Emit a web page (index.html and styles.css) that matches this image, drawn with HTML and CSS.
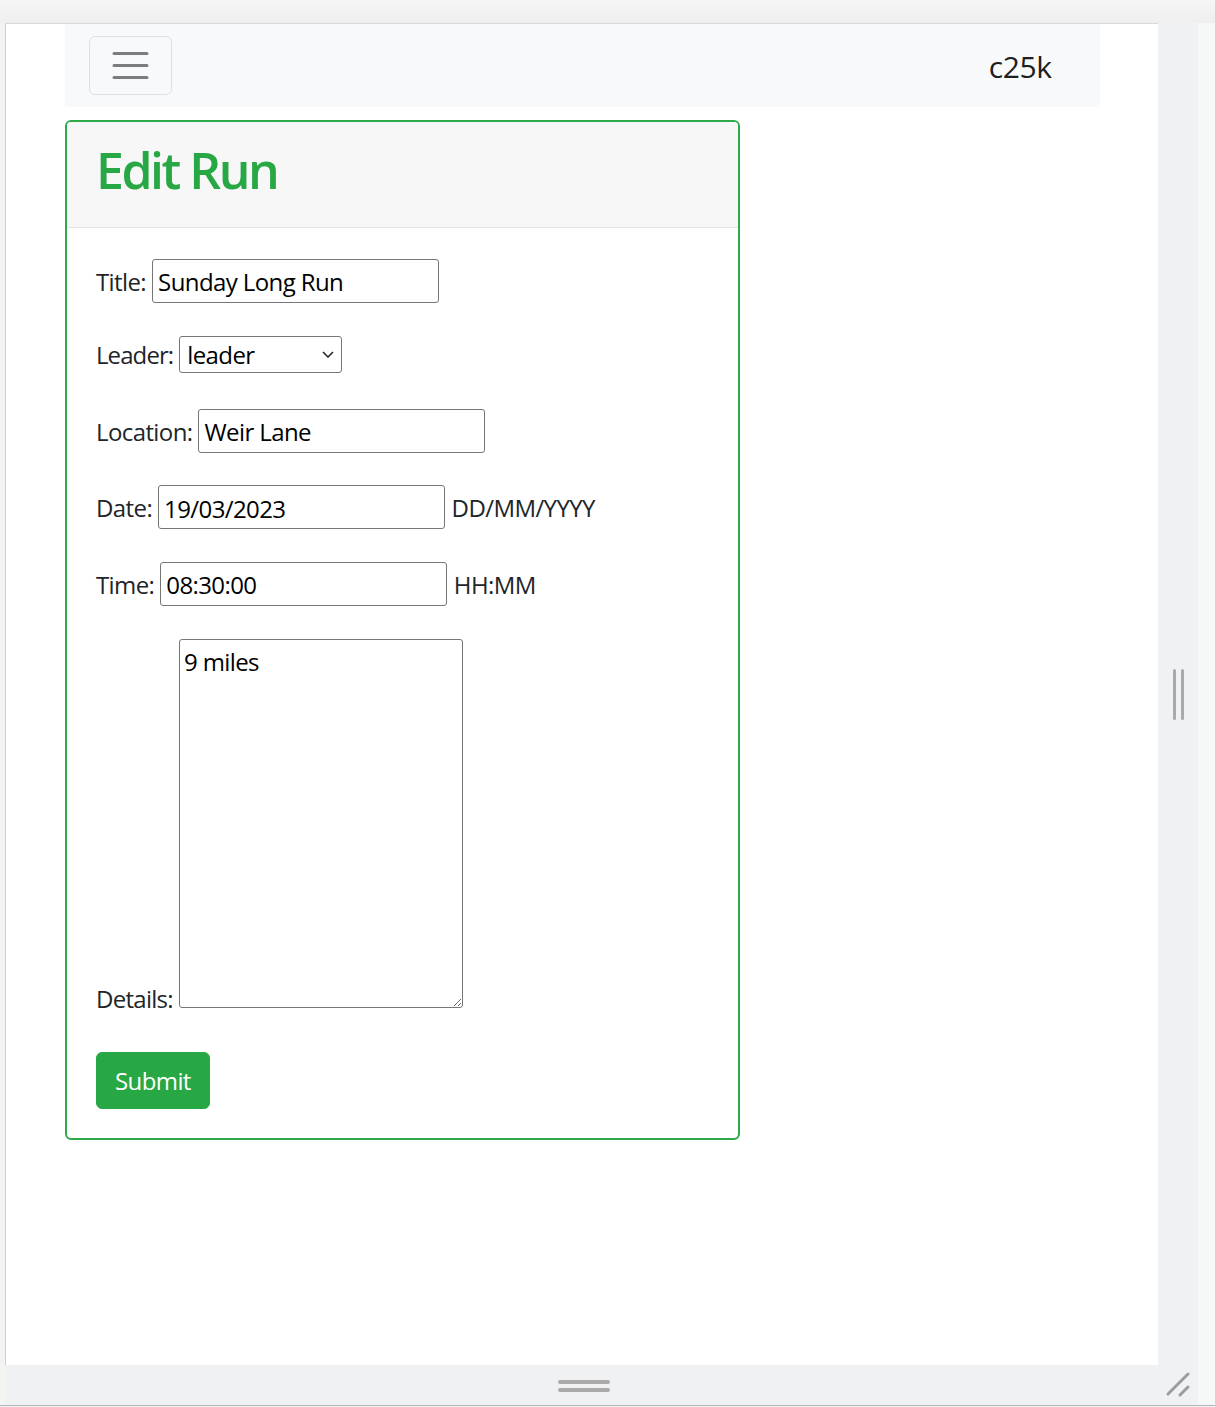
FILE: index.html
```html
<!DOCTYPE html>
<html lang="en">
<head>
<meta charset="utf-8">
<title>Edit Run</title>
<link rel="stylesheet" href="styles.css">
</head>
<body>
<div class="top-strip"></div>
<div class="stage">
  <div class="edge-left"></div>
  <div class="viewport">
    <div class="container">
      <nav class="navbar">
        <button class="toggler" type="button" aria-label="Toggle navigation">
          <svg class="toggler-icon" viewBox="0 0 30 30" width="45" height="45"><path d="M4 7h22M4 15h22M4 23h22" stroke="rgba(0,0,0,.5)" stroke-width="2" stroke-linecap="round" fill="none"/></svg>
        </button>
        <a class="brand" href="#">c25k</a>
      </nav>
      <div class="card">
        <div class="card-header"><h1 class="card-title">Edit Run</h1></div>
        <form class="card-body">
          <div class="field">
            <label for="title">Title:</label>
            <input class="text-input" id="title" type="text" value="Sunday Long Run">
          </div>
          <div class="field field-select">
            <label class="label-tight" for="leader">Leader:</label>
            <div class="select-wrap">
              <select class="select" id="leader"><option>leader</option></select>
              <svg class="chevron" viewBox="0 0 12 7" width="12" height="7"><path d="M1 1l5 5 5-5" stroke="#222" stroke-width="1.5" fill="none"/></svg>
            </div>
          </div>
          <div class="field">
            <label for="location">Location:</label>
            <input class="text-input" id="location" type="text" value="Weir Lane">
          </div>
          <div class="field">
            <label for="date">Date:</label>
            <input class="text-input" id="date" type="text" value="19/03/2023">
            <span class="hint">DD/MM/YYYY</span>
          </div>
          <div class="field">
            <label for="time">Time:</label>
            <input class="text-input" id="time" type="text" value="08:30:00">
            <span class="hint">HH:MM</span>
          </div>
          <div class="field field-details">
            <label class="label-details" for="details">Details:</label>
            <textarea class="textarea" id="details">9 miles</textarea>
          </div>
          <button class="btn-submit" type="submit">Submit</button>
        </form>
      </div>
    </div>
  </div>
  <div class="gutter-right">
    <div class="grip-v"><span></span><span></span></div>
  </div>
  <div class="beyond"></div>
  <div class="edge-left-bottom"></div>
  <div class="gutter-bottom">
    <div class="grip-h"><span></span><span></span></div>
  </div>
  <div class="corner">
    <svg viewBox="0 0 40 40" width="40" height="40"><path d="M30 9L10 29M30 22L22 30" stroke="#9c9c9c" stroke-width="3" stroke-linecap="round" fill="none"/></svg>
  </div>
  <div class="beyond-bottom"></div>
  <div class="bottom-line"></div>
</div>
</body>
</html>
```
FILE: styles.css
```css
html, body {
  margin: 0;
  padding: 0;
}
body {
  background: #f4f4f4;
  font-family: "Open Sans", "Noto Sans", sans-serif;
  font-size: 24px;
  line-height: 1.5;
  color: #212529;
  letter-spacing: -0.025em;
  width: 1215px;
  height: 1407px;
  overflow: hidden;
}
.top-strip {
  height: 23px;
  background: linear-gradient(#f5f5f5, #efefef);
}
.stage {
  display: grid;
  grid-template-columns: 5px 1153px 40px 1fr;
  grid-template-rows: 1342px 40px 1px 1px;
}
.edge-left {
  background: #f3f3f3;
}
.viewport {
  background: #fff;
  border-top: 1px solid #d9d9d9;
  border-left: 1px solid #cfcfcf;
  overflow: hidden;
}
.gutter-right {
  background: #f0f1f3;
  display: flex;
  align-items: center;
  justify-content: center;
}
.grip-v {
  display: flex;
  gap: 4.5px;
  margin-left: 1px;
}
.grip-v span {
  width: 3.5px;
  height: 51px;
  border-radius: 2px;
  background: #a9a9a9;
}
.beyond {
  background: #f6f7f7;
}
.edge-left-bottom {
  background: #f3f5f3;
}
.gutter-bottom {
  background: #f0f1f3;
  display: flex;
  align-items: center;
  justify-content: center;
}
.grip-h {
  display: flex;
  flex-direction: column;
  gap: 4.5px;
  margin-left: 5px;
  margin-top: 2px;
}
.grip-h span {
  width: 52px;
  height: 3.5px;
  border-radius: 2px;
  background: #aaaaaa;
}
.corner {
  background: #f0f1f3;
  line-height: 0;
}
.beyond-bottom {
  background: #f6f7f7;
}
.bottom-line {
  grid-column: 1 / -1;
  background: #b3b5bc;
}

/* page inside the frame */
.container {
  box-sizing: border-box;
  width: 1080px;
  margin: 0 auto;
  padding: 0 22.5px;
}
.navbar {
  background: #f8f9fa;
  padding: 12px 24px;
  display: flex;
  justify-content: space-between;
  align-items: center;
}
.toggler {
  box-sizing: border-box;
  width: 83px;
  height: 59px;
  padding: 0;
  border: 1.5px solid rgba(0, 0, 0, 0.1);
  border-radius: 6px;
  background: transparent;
  display: flex;
  align-items: center;
  justify-content: center;
}
.toggler-icon {
  display: block;
}
.brand {
  font-size: 30px;
  line-height: 45px;
  padding: 8px 0 6px;
  margin-right: 24px;
  color: rgba(0, 0, 0, 0.9);
  text-decoration: none;
  letter-spacing: -0.015em;
}
.card {
  box-sizing: border-box;
  width: 675px;
  margin-top: 12.5px;
  border: 2px solid #2eaa4b;
  border-radius: 6px;
  overflow: hidden;
  background: #fff;
}
.card-header {
  background: #f7f7f7;
  padding: 17.5px 30px 18.5px 29.5px;
  border-bottom: 1.5px solid #e3e3e3;
}
.card-title {
  margin: 0 0 7px;
  font-size: 50px;
  line-height: 62px;
  font-weight: 600;
  color: #28a745;
  letter-spacing: -0.05em;
}
.card-body {
  display: block;
  padding: 31.5px 30px 29px 29.5px;
  margin: 0;
}
.field {
  display: flex;
  align-items: center;
  gap: 6px;
  height: 43px;
  margin-bottom: 33.5px;
  white-space: nowrap;
}
.field label {
  line-height: 36px;
  margin-top: 2px;
}
.field .label-tight {
  letter-spacing: -0.038em;
}
.field .label-details {
  letter-spacing: -0.03em;
}
.field-select {
  height: 40px;
  align-items: flex-start;
}
.field-select label {
  margin-top: 1px;
}
.field-details {
  height: auto;
  align-items: flex-end;
  margin-bottom: 44.5px;
}
.field-details label {
  margin-bottom: -9px;
}
.text-input {
  box-sizing: border-box;
  width: 286.5px;
  height: 44px;
  margin: 0;
  padding: 2px 5px 0;
  border: 1px solid #767676;
  border-radius: 3px;
  font: inherit;
  letter-spacing: inherit;
  color: #000;
  background: #fff;
}
.hint {
  line-height: 36px;
  margin-left: 1px;
  margin-top: 2px;
}
.select-wrap {
  position: relative;
  width: 163px;
  height: 37px;
}
.select {
  -webkit-appearance: none;
  appearance: none;
  box-sizing: border-box;
  width: 163px;
  height: 37px;
  margin: 0;
  padding: 1px 30px 0 7px;
  border: 1px solid #767676;
  border-radius: 3px;
  background: #fff;
  font: inherit;
  line-height: 34px;
  letter-spacing: inherit;
  color: #000;
}
.chevron {
  position: absolute;
  right: 8px;
  top: 15px;
  pointer-events: none;
}
.textarea {
  box-sizing: border-box;
  width: 284.5px;
  height: 369px;
  margin: 0;
  padding: 4px 4px;
  border: 1px solid #767676;
  border-radius: 3px;
  font: inherit;
  line-height: 36px;
  letter-spacing: inherit;
  color: #000;
  background: #fff;
}
.btn-submit {
  box-sizing: border-box;
  height: 56.5px;
  margin: 0;
  padding: 1px 18px 0;
  border: 1.5px solid #28a745;
  border-radius: 6px;
  background: #28a745;
  color: #fff;
  font: inherit;
  line-height: 36px;
  letter-spacing: inherit;
}
```
